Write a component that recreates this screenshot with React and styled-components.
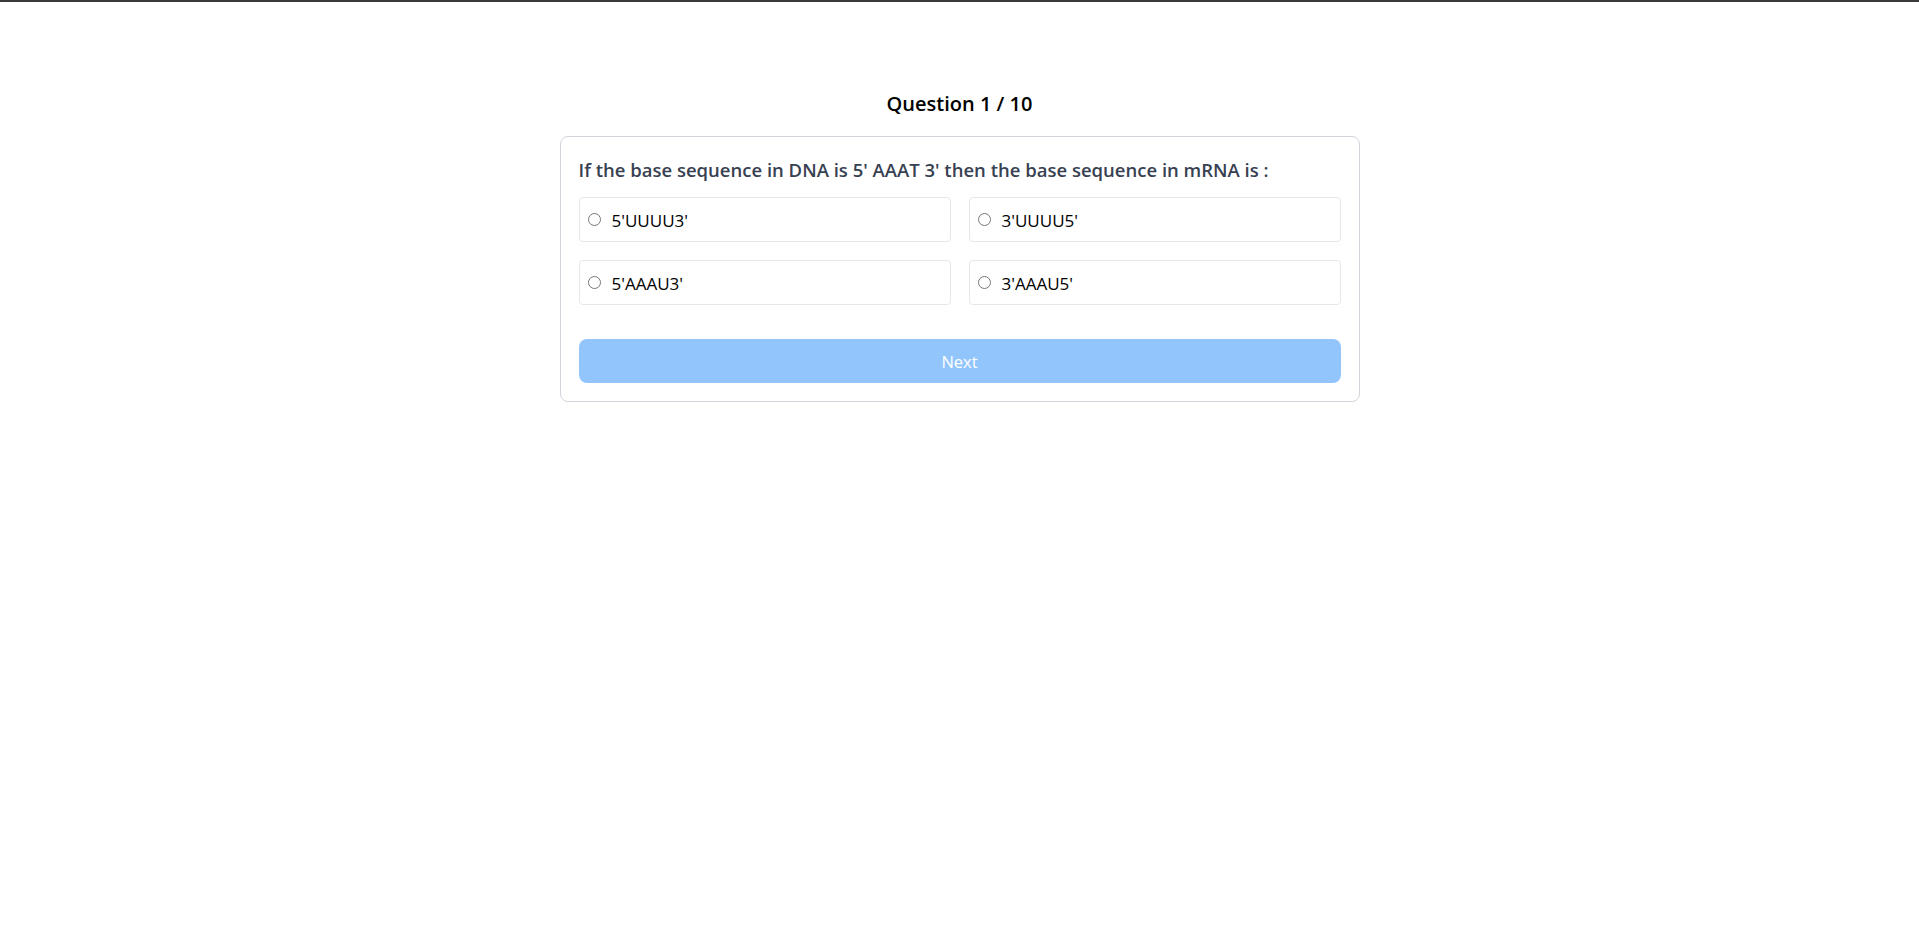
import { useState } from "react";
import styled, { createGlobalStyle } from "styled-components";

const QUESTION = {
  text: "If the base sequence in DNA is 5' AAAT 3' then the base sequence in mRNA is :",
  options: ["5'UUUU3'", "3'UUUU5'", "5'AAAU3'", "3'AAAU5'"],
};

export default function App() {
  const [selected, setSelected] = useState(null);

  return (
    <>
      <GlobalStyle />
      <TopBar />
      <Page>
        <Title>Question 1 / 10</Title>
        <Card>
          <QuestionText>{QUESTION.text}</QuestionText>
          <Options>
            {QUESTION.options.map((opt) => (
              <Option key={opt}>
                <Radio
                  type="radio"
                  name="answer"
                  checked={selected === opt}
                  onChange={() => setSelected(opt)}
                />
                <span>{opt}</span>
              </Option>
            ))}
          </Options>
          <NextBtn disabled={selected === null}>Next</NextBtn>
        </Card>
      </Page>
    </>
  );
}

const GlobalStyle = createGlobalStyle`
  body {
    margin: 0;
    background: #fff;
    font-family: "Open Sans", "Noto Sans", sans-serif;
  }
  * {
    box-sizing: border-box;
  }
`;

const TopBar = styled.div`
  height: 2px;
  background: #3a3a3a;
`;

const Page = styled.main`
  display: flex;
  flex-direction: column;
  align-items: center;
  padding-top: 88px;
`;

const Title = styled.h1`
  margin: 0 0 18px;
  font-size: 20px;
  line-height: 28px;
  font-weight: 600;
  color: #000;
`;

const Card = styled.section`
  width: 800px;
  padding: 18px;
  border: 1px solid #d1d5db;
  border-radius: 8px;
  background: #fff;
`;

const QuestionText = styled.p`
  margin: 0 0 13px;
  padding-top: 1px;
  font-size: 18.5px;
  line-height: 28px;
  font-weight: 600;
  color: #374151;
`;

const Options = styled.div`
  display: grid;
  grid-template-columns: 1fr 1fr;
  gap: 18px;
`;

const Option = styled.label`
  display: flex;
  align-items: center;
  gap: 11px;
  height: 45px;
  padding: 2px 8px 0;
  border: 1px solid #e5e7eb;
  border-radius: 4px;
  font-size: 17px;
  color: #000;
  cursor: pointer;
`;

const Radio = styled.input`
  margin: 0 0 2px;
  width: 13px;
  height: 13px;
`;

const NextBtn = styled.button`
  display: block;
  width: 100%;
  height: 44px;
  margin-top: 34px;
  border: none;
  border-radius: 8px;
  background: ${({ disabled }) => (disabled ? "#93c5fd" : "#3b82f6")};
  color: #fff;
  font-family: inherit;
  font-size: 16.5px;
  cursor: ${({ disabled }) => (disabled ? "default" : "pointer")};
`;
